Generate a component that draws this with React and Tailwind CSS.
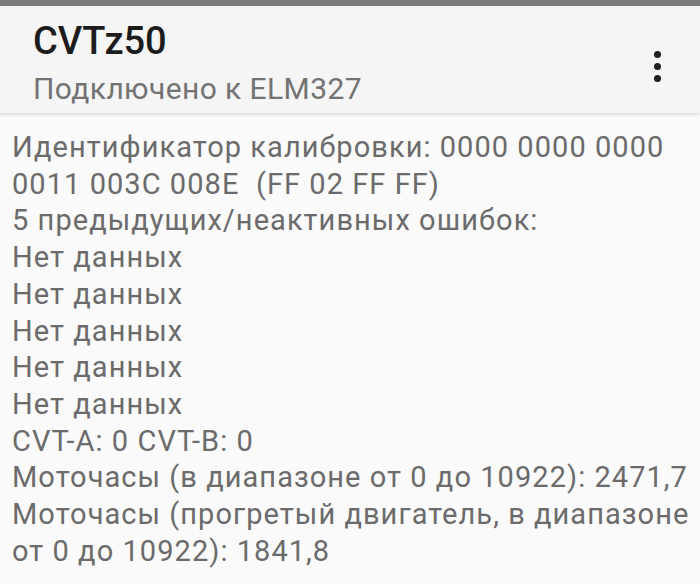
export default function App() {
  const lines = [
    "Идентификатор калибровки: 0000 0000 0000",
    "0011 003C 008E\u00a0\u00a0(FF 02 FF FF)",
    "5 предыдущих/неактивных ошибок:",
    "Нет данных",
    "Нет данных",
    "Нет данных",
    "Нет данных",
    "Нет данных",
    "CVT-A: 0 CVT-B: 0",
    "Моточасы (в диапазоне от 0 до 10922): 2471,7",
    "Моточасы (прогретый двигатель, в диапазоне",
    "от 0 до 10922): 1841,8",
  ];
  return (
    <div className="w-[700px] h-[584px] overflow-hidden bg-[#fafafa] flex flex-col" style={{ fontFamily: "Roboto, 'Noto Sans', sans-serif" }}>
      <div className="h-[6px] bg-[#7a7a7a] shrink-0" />
      <div className="h-[107px] shrink-0 bg-[#f5f5f5] flex items-start pl-[33px] pr-[39px] pt-[13px] shadow-[0_2px_3px_rgba(0,0,0,0.12)] relative z-10">
        <div className="flex-1 flex flex-col">
          <div className="text-[38px] leading-[44px] font-medium text-[#1c1c1c]">CVTz50</div>
          <div className="text-[30px] leading-[40px] mt-[6px] text-[#737373] tracking-[0.4px]">Подключено к ELM327</div>
        </div>
        <div className="flex flex-col gap-[5px] items-center mt-[32px]">
          <span className="w-[7px] h-[7px] rounded-full bg-[#202020]" />
          <span className="w-[7px] h-[7px] rounded-full bg-[#202020]" />
          <span className="w-[7px] h-[7px] rounded-full bg-[#202020]" />
        </div>
      </div>
      <div className="pl-[12px] pt-[16px] text-[29px] leading-[36.7px] text-[#6b6b6b] whitespace-pre tracking-[1.05px]">
        {lines.map((l, i) => (
          <div key={i}>{l}</div>
        ))}
      </div>
    </div>
  );
}
